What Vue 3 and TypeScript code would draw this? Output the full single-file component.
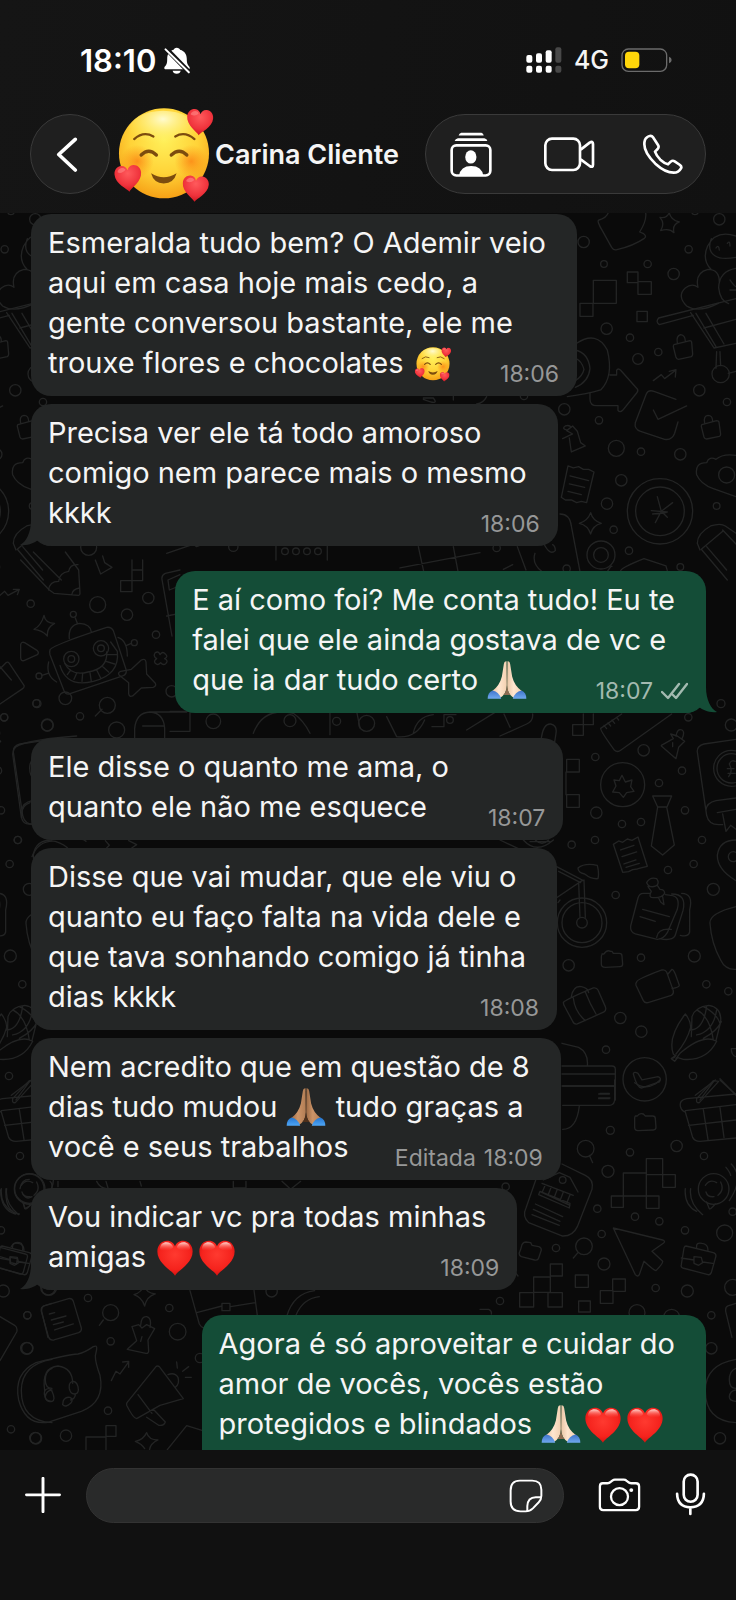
<script setup lang="ts">
type Message = {
  id: number
  sent: boolean
  text: string
  time?: string
  edited?: boolean
  tail?: boolean
  groupStart?: boolean
}

type Part = { kind: 'text' | 'emoji'; value: string }

const contact = 'Carina Cliente'

const messages: Message[] = [
  { id: 1, sent: false, time: '18:06', text: 'Esmeralda tudo bem? O Ademir veio\naqui em casa hoje mais cedo, a\ngente conversou bastante, ele me\ntrouxe flores e chocolates 🥰' },
  { id: 2, sent: false, time: '18:06', tail: true, text: 'Precisa ver ele tá todo amoroso\ncomigo nem parece mais o mesmo\nkkkk' },
  { id: 3, sent: true, time: '18:07', tail: true, groupStart: true, text: 'E aí como foi? Me conta tudo! Eu te\nfalei que ele ainda gostava de vc e\nque ia dar tudo certo 🙏🏻' },
  { id: 4, sent: false, time: '18:07', groupStart: true, text: 'Ele disse o quanto me ama, o\nquanto ele não me esquece' },
  { id: 5, sent: false, time: '18:08', text: 'Disse que vai mudar, que ele viu o\nquanto eu faço falta na vida dele e\nque tava sonhando comigo já tinha\ndias kkkk' },
  { id: 6, sent: false, time: '18:09', edited: true, text: 'Nem acredito que em questão de 8\ndias tudo mudou 🙏🏽 tudo graças a\nvocê e seus trabalhos' },
  { id: 7, sent: false, time: '18:09', tail: true, text: 'Vou indicar vc pra todas minhas\namigas ❤️❤️' },
  { id: 8, sent: true, groupStart: true, text: 'Agora é só aproveitar e cuidar do\namor de vocês, vocês estão\nprotegidos e blindados 🙏🏻❤️❤️' },
]

const emojiArt: Record<string, { id: string; cls: string }> = {
  '🥰': { id: 'emoji-face', cls: 'emoji-face' },
  '🙏🏻': { id: 'emoji-pray-light', cls: 'emoji-pray' },
  '🙏🏽': { id: 'emoji-pray-medium', cls: 'emoji-pray' },
  '❤️': { id: 'emoji-heart', cls: 'emoji-heart' },
}

function parts(text: string): Part[] {
  return text
    .split(/(🥰|🙏🏻|🙏🏽|❤️)/u)
    .filter((p) => p.length > 0)
    .map((p) => ({ kind: p in emojiArt ? 'emoji' : 'text', value: p }))
}

// Bubbles of the wallpaper: x, y, radius on each doodle sheet
const dotsA = [[958,58,17],[866,148,11],[612,192,10],[743,192,11],[821,222,17],[551,126,17],[620,386,17],[690,413,11],[714,477,16],[775,456,11],[898,571,17],[981,606,11],[493,628,17],[597,661,11],[649,745,24],[723,755,11],[841,763,17],[664,841,17],[621,911,17],[950,918,10],[641,989,11],[687,1052,11],[603,1065,42],[603,1065,22],[841,1101,10],[780,934,98],[780,934,73],[962,522,26],[885,34,10],[290,1044,11],[372,588,11],[500,1106,11],[980,825,24]]
const dotsB = [[663,11,12],[565,52,11],[694,75,18],[431,151,17],[286,171,11],[546,212,11],[477,249,11],[289,338,17],[366,372,11],[423,366,11],[555,331,11],[606,420,11],[285,420,11],[215,434,11],[581,492,11],[504,510,11],[640,568,18],[347,585,11],[206,796,17],[423,773,11],[583,768,18],[619,853,11],[685,874,11],[361,954,17],[424,995,17],[318,1049,11],[579,1128,11],[368,254,66],[246,668,74],[246,668,60],[246,668,16],[434,1138,65],[695,205,54],[695,205,44],[700,470,15]]
const dotsC = [[391,151,12],[590,198,17],[450,217,11],[672,228,11],[384,274,18],[352,386,11],[465,410,11],[538,424,11],[758,395,11],[615,451,11],[365,462,11],[228,504,11],[734,459,24],[372,552,18],[527,624,11],[622,633,18],[758,622,24],[60,663,11],[694,706,11],[471,698,24],[694,805,17],[720,1075,17],[77,320,11],[701,327,46],[317,206,25],[312,499,25],[248,300,10],[575,712,24]]
const dotsD = [[92,131,11],[293,134,24],[381,164,17],[445,114,17],[468,224,11],[403,248,9],[220,163,9],[117,348,9],[196,415,19],[322,436,24],[109,430,11],[240,469,11],[142,496,17],[350,510,24],[53,840,11],[214,297,23],[214,297,10],[303,265,23],[303,265,10],[12,472,11],[266,-38,24],[515,394,17],[1350,480,10],[1100,490,24],[870,482,18],[640,484,22],[700,-40,14],[1010,484,12],[855,-62,10],[855,-26,10],[888,-62,10],[888,-26,10],[921,-62,10],[921,-26,10],[954,-62,10],[954,-26,10]]
const dotsE = [[264,414,11],[82,466,11],[332,458,24],[533,515,25],[332,544,11],[80,565,18],[324,752,11],[33,808,11],[106,834,17],[198,827,17],[508,444,11],[815,394,17],[145,385,20],[600,594,14],[88,86,44]]
</script>

<template>
  <div class="phone">
    <svg class="sprites" aria-hidden="true">
      <defs>
        <radialGradient id="face-skin" cx="50%" cy="35%" r="68%">
          <stop offset="0" stop-color="#fff05a" />
          <stop offset="0.55" stop-color="#ffd338" />
          <stop offset="1" stop-color="#f59b12" />
        </radialGradient>
        <radialGradient id="face-shine" cx="50%" cy="20%" r="60%">
          <stop offset="0" stop-color="#fffbd0" />
          <stop offset="1" stop-color="#fff05a" stop-opacity="0" />
        </radialGradient>
        <radialGradient id="face-cheek">
          <stop offset="0" stop-color="#fb8213" stop-opacity="0.8" />
          <stop offset="1" stop-color="#fb8f13" stop-opacity="0" />
        </radialGradient>
        <radialGradient id="small-heart" cx="50%" cy="30%" r="75%">
          <stop offset="0" stop-color="#ff5a5c" />
          <stop offset="0.6" stop-color="#f0333c" />
          <stop offset="1" stop-color="#c9121d" />
        </radialGradient>
        <radialGradient id="big-heart" cx="50%" cy="40%" r="65%">
          <stop offset="0" stop-color="#ff3a30" />
          <stop offset="0.65" stop-color="#f5231d" />
          <stop offset="1" stop-color="#cf0d0d" />
        </radialGradient>
        <linearGradient id="heart-gloss" x1="0" y1="0" x2="0" y2="1">
          <stop offset="0" stop-color="#ffd9d2" />
          <stop offset="1" stop-color="#ff4a40" stop-opacity="0" />
        </linearGradient>
        <linearGradient id="sleeve" x1="0" y1="0" x2="0" y2="1">
          <stop offset="0" stop-color="#3f73c9" />
          <stop offset="1" stop-color="#6fa8ee" />
        </linearGradient>
        <linearGradient id="sleeve-bright" x1="0" y1="0" x2="0" y2="1">
          <stop offset="0" stop-color="#2374cf" />
          <stop offset="1" stop-color="#4fa6f5" />
        </linearGradient>
        <linearGradient id="skin-light" x1="0" y1="0" x2="1" y2="0">
          <stop offset="0" stop-color="#e9c5a4" />
          <stop offset="0.45" stop-color="#ffe6cf" />
          <stop offset="1" stop-color="#f3d0b0" />
        </linearGradient>
        <linearGradient id="skin-medium" x1="0" y1="0" x2="1" y2="0">
          <stop offset="0" stop-color="#9c6a44" />
          <stop offset="0.45" stop-color="#cc9468" />
          <stop offset="1" stop-color="#b27d54" />
        </linearGradient>
      </defs>

      <symbol id="heart-shape" viewBox="0 0 100 100">
        <path d="M50 98C44 86 2 66 2 32C2 14 15 3 28 3C40 3 47 10 50 20C53 10 60 3 72 3C85 3 98 14 98 32C98 66 56 86 50 98Z" fill="url(#small-heart)" />
        <path d="M14 24C15 12 36 4 43 18C35 28 20 30 14 24Z" fill="#ff8b89" opacity="0.6" />
      </symbol>

      <symbol id="emoji-heart" viewBox="0 0 100 100">
        <path d="M50 99C44 86 1 66 1 32C1 13 14 2 27 2C40 2 47 9 50 18C53 9 60 2 73 2C86 2 99 13 99 32C99 66 56 86 50 99Z" fill="url(#big-heart)" />
        <path d="M8 25C9 0 40 2 45 20C38 30 14 34 8 25Z" fill="url(#heart-gloss)" />
        <path d="M55 20C60 2 91 0 92 25C86 34 62 30 55 20Z" fill="url(#heart-gloss)" />
      </symbol>

      <symbol id="emoji-face" viewBox="340 254 306 296">
        <circle cx="493" cy="400" r="136" fill="url(#face-skin)" />
        <ellipse cx="490" cy="335" rx="105" ry="64" fill="url(#face-shine)" />
        <circle cx="412" cy="424" r="50" fill="url(#face-cheek)" />
        <circle cx="575" cy="424" r="50" fill="url(#face-cheek)" />
        <g fill="none" stroke="#7c4c0e" stroke-linecap="round">
          <path d="M403 357Q431 332 461 349M527 349Q556 332 585 357" stroke-width="7" />
          <path d="M424 405Q447 382 470 405M515 405Q539 382 562 405" stroke-width="10" />
        </g>
        <path d="M454 460Q492 484 531 460Q523 490 492 491Q462 490 454 460Z" fill="#7c4c0e" />
        <use href="#heart-shape" x="560" y="264" width="82" height="84" transform="rotate(5 600 306)" />
        <use href="#heart-shape" x="343" y="434" width="84" height="84" transform="rotate(-5 385 476)" />
        <use href="#heart-shape" x="547" y="465" width="82" height="84" transform="rotate(4 588 507)" />
      </symbol>

      <symbol id="emoji-pray-light" viewBox="538 72 121 121">
        <path d="M597 76Q590 75 589 84L583 122Q576 150 554 166L576 188Q598 176 598 148Z" fill="url(#skin-light)" />
        <path d="M600 76Q607 75 608 84L614 122Q621 150 643 166L621 188Q599 176 599 148Z" fill="url(#skin-light)" />
        <path d="M598 84V150Q597 168 588 178H609Q600 168 599 150V84Z" fill="#8e6c52" />
        <path d="M540 189Q540 170 555 164Q574 168 581 189Z" fill="url(#sleeve)" />
        <path d="M657 189Q657 170 642 164Q623 168 616 189Z" fill="url(#sleeve)" />
      </symbol>

      <symbol id="emoji-pray-medium" viewBox="538 72 121 121">
        <path d="M597 76Q590 75 589 84L583 122Q576 150 554 166L576 188Q598 176 598 148Z" fill="url(#skin-medium)" />
        <path d="M600 76Q607 75 608 84L614 122Q621 150 643 166L621 188Q599 176 599 148Z" fill="url(#skin-medium)" />
        <path d="M598 84V150Q597 168 588 178H609Q600 168 599 150V84Z" fill="#4e301b" />
        <path d="M540 189Q540 170 555 164Q574 168 581 189Z" fill="url(#sleeve-bright)" />
        <path d="M657 189Q657 170 642 164Q623 168 616 189Z" fill="url(#sleeve-bright)" />
      </symbol>
    </svg>

    <header class="top">
      <div class="status">
        <div class="clock">
          <span>18:10</span>
          <svg class="bell" viewBox="494 80 76 80" role="img" aria-label="Silencioso">
            <path fill="#fff" d="M531 82c-5 0-8 3-9 6c-14 4-19 14-19 27c0 14-2 18-7 23c-3 4-2 8 3 8h66c5 0 6-4 3-8c-5-6-7-10-7-23c0-13-6-23-20-27c-1-3-4-6-10-6ZM519 150h24q-2 9-12 9t-12-9Z" />
            <path d="M499 84L567 154" stroke="#131313" stroke-width="14" />
            <path d="M498 87L567 155" stroke="#fff" stroke-width="6" stroke-linecap="round" />
          </svg>
        </div>
        <div class="indicators">
          <svg class="signal" viewBox="479 80 108 78" role="img" aria-label="Sinal">
            <g fill="#fff">
              <rect x="480" y="104" width="18" height="23" rx="6" />
              <rect x="480" y="136" width="18" height="21" rx="6" />
              <rect x="509" y="99" width="18" height="28" rx="6" />
              <rect x="509" y="136" width="18" height="21" rx="6" />
              <rect x="538" y="90" width="18" height="37" rx="6" />
              <rect x="538" y="136" width="18" height="21" rx="6" />
            </g>
            <g fill="#484848">
              <rect x="567" y="81" width="18" height="46" rx="6" />
              <rect x="567" y="136" width="18" height="21" rx="6" />
            </g>
          </svg>
          <span class="network">4G</span>
          <svg class="battery" viewBox="758 83 153 72" role="img" aria-label="Bateria">
            <rect x="761" y="86" width="134" height="67" rx="19" fill="none" stroke="#6b6b6b" stroke-width="4" />
            <rect x="770" y="94" width="43" height="50" rx="12" fill="#ffd60a" />
            <path d="M902 109q8 3 8 10t-8 10Z" fill="#6b6b6b" />
          </svg>
        </div>
      </div>

      <div class="nav">
        <button type="button" class="back" aria-label="Voltar">
          <svg viewBox="168 348 66 106" aria-hidden="true">
            <path d="M226 355L176 401L226 448" fill="none" stroke="#fff" stroke-width="11" stroke-linecap="round" stroke-linejoin="round" />
          </svg>
        </button>
        <svg class="avatar" role="img" aria-label="🥰"><use href="#emoji-face" /></svg>
        <h1>{{ contact }}</h1>
        <div class="actions">
          <button type="button" aria-label="Contatos">
            <svg class="i-card" viewBox="246 330 127 135" aria-hidden="true">
              <path fill="#fff" d="M280 332h61q6 2 7 8h-76q2-6 8-8ZM270 348h80q8 2 9 9h-99q2-7 10-9Z" />
              <rect x="251" y="370" width="117" height="91" rx="14" fill="none" stroke="#fff" stroke-width="8" />
              <ellipse cx="309" cy="405" rx="17" ry="20" fill="#fff" />
              <path fill="#fff" d="M273 462q5-30 37-30t37 30Z" />
            </svg>
          </button>
          <button type="button" aria-label="Chamada de vídeo">
            <svg class="i-video" viewBox="518 350 165 105" aria-hidden="true">
              <g fill="none" stroke="#fff" stroke-width="8" stroke-linejoin="round">
                <rect x="534" y="355" width="104" height="94" rx="20" />
                <path d="M640 388L667 367Q677 361 677 371V433Q677 443 667 437L640 417" />
              </g>
            </svg>
          </button>
          <button type="button" aria-label="Ligar">
            <svg class="i-phone" viewBox="825 343 120 120" aria-hidden="true">
              <path fill="none" stroke="#fff" stroke-width="8" stroke-linejoin="round" d="M845 349q6-2 10 4l15 23q4 6-1 12l-8 8q4 12 16 24q12 11 23 14l8-8q6-5 12-1l16 11q6 5 3 10q-7 13-22 13q-25 0-55-27q-33-32-33-58q0-16 8-21q3-3 8-4Z" />
            </svg>
          </button>
        </div>
      </div>
    </header>

    <main class="chat">
      <svg class="wallpaper" viewBox="0 213 736 1237" preserveAspectRatio="xMidYMin slice" aria-hidden="true">
        <g id="doodles" fill="none" stroke-width="4" stroke-linecap="round" stroke-linejoin="round">
          <g transform="translate(400 200) scale(0.3333)">
            <circle v-for="(d, i) in dotsA" :key="i" :cx="d[0]" :cy="d[1]" :r="d[2]" />
            <path d="M625 38q-5 15-28 22q-8 2 10 32l28 50q6 10 16 7q50-12 82-34q8-6-2-14l-12-5q22-35 18-58" />
            <path d="M808 38Q812 60 838 66Q816 74 822 98Q808 84 782 92Q796 70 780 52Q800 56 808 38ZM572 938Q578 962 604 970Q578 976 572 1002Q564 976 538 970Q564 962 572 938Z" />
            <path d="M580 241h69v69h-69ZM540 310h39v39h-39ZM682 216h32v32h-32ZM714 245h40v38h-40ZM711 334h31v31h-31Z" />
            <path d="M1008 108q-60-20-85 30q-18 40 10 70M1008 172q-44 8-62-4q-26-16-12-52M958 150q-2-18-10-6M990 138q0-18-8-8M955 310q-60 30-95 8q-30-30-4-54q20-16 38-2q-10-44 30-54q36 0 34 42M1008 205q-50 8-52 58q4 40 30 48M990 240q12 18 18 20M990 270h18" />
            <path d="M776 354L1008 296M778 374L880 346M776 354q-10 12 2 20M872 338L942 444M888 340L948 440M918 340l54 92M912 384l96-26M942 444l66-14M950 455l-2 50M960 455l2 42M985 520l23-6" />
            <path d="M822 434l48-12q4 0 5 4l3 36q0 6-4 8l-38 8q-6 0-8-6l-8-32q0-6 2-6ZM832 428q-4-20 10-24q14 2 14 20M906 674l44-12q6 0 7 4l5 36q0 6-4 7l-38 8q-6 0-8-6l-8-32q0-4 2-5ZM914 668q-4-20 10-22q14 0 14 18" />
            <path d="M760 542l24-18l10 12l34-26M808 514l20-5l-2 22M622 1115q12-20 14-16M310 1108l28-14" />
            <path d="M530 430q60-40 92 20q20 80-20 120q-40 12-100 20M526 450q40 10 44 56q-4 40-44 56M526 474q20 10 26 34q-4 20-26 34M630 525h20v-14q4-8 12 0l50 56q4 6-2 12l-42 52q-8 8-14 0v-14h-64q-20 0-20-20v-20" />
            <path d="M828 598l-66-24q-18-6-24 10l-32 84q-4 20 16 26l72 24q22 4 30-18l10-34M760 630l14 28l86-40" />
            <path d="M488 716l30-14l-18-10l18-14l14 16l10 34l14 10l-42 18l-6-42M500 690q-16-4-4-12q12-4 18 4" />
            <path d="M504 798l16 6l16-4l14 8l16 0l16 8l-22 92l-16-4l-14 4l-16-8l-18 0l-12-8ZM510 828l56 14M508 852l46 10M504 874l40 10" />
            <path d="M772 890l12 44l34-26M784 934l-18 34M784 934l18 18M754 932l48 4M758 942l40-4" />
            <path d="M1008 766q-40-6-60 12q-20-10-28 10q-36 0-30 36q12 28 50 42l68 24M900 1050l-8-20q0-30 40-52q30-10 44 0l32 22M904 1048l66-56M906 1050l76 90M968 990l40 42M920 1040l60 70" />
            <path d="M480 942q30 0 34 36l26 136M405 1060q-10 30 20 54M432 1032q18 36 34 20q0-14-8-18M55 1040l16 74M160 1040l14 74M352 1040l26 70M0 1104l240-46M662 1112q4-10 70-36l66 22l4 14" />
            <path d="M70 594h30q20 24-30 4M160 586v14M260 590q-10 20-30 22" />
          </g>
          <g transform="translate(500 700) scale(0.3333)">
            <circle v-for="(d, i) in dotsB" :key="i" :cx="d[0]" :cy="d[1]" :r="d[2]" />
            <path d="M366 226l10 20l20-6l-4 20l10 14l-22 4l-10 14l-12-14l-20-2l10-18l-6-18l16 2Z" />
            <path d="M302 85L365 42M302 85q-2 6 40 64q10 10 20 2L515 42M312 76l8 10M324 68l8 10M336 60l8 10M350 52l6 8" />
            <path d="M200 178h38v38h-38ZM200 284h38v38h-38ZM198 216v68M218 74h32v32h-32ZM250 42v32h30v-32M12 42l18 40M0 108l80-36q20-8 18-30M124 114q6-44 28-42q20 4 16 28l-4 26" />
            <path d="M458 288h57l-14 33h-28ZM473 321l-19 117l34 27l35-30l-23-114" />
            <path d="M340 433l16-10l12 4l14-10l14 4l18-10l28 88l-16 4l-14 4l-14 2l-12 6l-18 2ZM362 450l40-14M366 470l44-14M372 492l36-12M378 502l40-12" />
            <path d="M484 136l36-20l-8-14l20 6l22 16l-18 18l-8 34l-44-38M528 108q4-24 18-18q10 6 0 26M518 128v12" />
            <path d="M708 118l-96 14q-22 6-20 24l28 190q6 28 36 28h12M708 294l-60 8q-28 6-30 28M708 328l-56 10M668 342l10 52l14-18l16 12M684 220h22M686 230q14-16 2-38q6-14 18-8M682 206h20" />
            <path d="M170 500l80 42M176 514l66 34M172 592l74-50M236 548l4 104M252 540l4 112M234 504q20-16 58-8q6 24 2 40q-20 2-40-14q-20-4-20-18ZM0 420l60 28M70 420q40 44 90 0M90 425h60M180 600l-6 8M106 420q20 20 40 0" />
            <path d="M450 580h-20q-12 0-16 14l-22 84q-2 18 14 24l66 16q18 0 30-20l30-70q10-40-20-42l-16-2M470 712q4-28 44-24M515 582q46 0 34 50l-24 76q-10 16-46 8M545 580q36 0 24 50v66q-4 16-28 10M428 628l80 22M420 650l46 14" />
            <path d="M440 548q10-18 30-12q10 14-2 22q-20 8-28-10ZM444 560l10 14q-8 14 0 18q30 4 40-12q0-12-14-12l-8-12M476 594l6 12l10 8l-4-24" />
            <path d="M708 620q-80 20-78 50q4 60 32 110q14 30 46 28M708 420q-50 0-56 46q0 44 56 76" />
            <path d="M306 762h6q8-14 20-8h4l4 6h18q8 0 8 8l2 24q0 8-8 8l-44 2q-12 0-12-10v-20q0-6 2-8ZM410 846q0-8 76-36q10-2 14 6l20 56q2 10-6 14l-70 22q-10 2-14-6l-22-46q-2-6 2-10ZM504 822l12-14q4 0 10 14l12 34q0 6-22 10" />
            <path d="M190 908q4-8 90-44q10-2 14 6l22 50q4 10-4 16l-80 36q-10 2-14-8l-26-48ZM220 894q4 40 36 68M256 876q14 36 32 66M214 890q6-34 30-30q20 4 22 18" />
            <path d="M514 1076q20-4 6-14q-18-50 36-120q16 20 16 40q-10 40-44 80M528 1076l12-16q70-60 110-36q-30 60-100 54l-14-4M528 1066l-14 10l10 8l10-12M576 950q10-30 50-34q40 6 36 50l-14 56M576 950l-2 60M590 930q40 20 50 90M610 920q40 20 50 50M570 990q40 0 50-70M590 1005q50-10 60-75M610 1015q40-20 54-50" />
            <path d="M186 1098h150q10 0 10 10v92M186 1122h160M186 1158h160M300 1180h28M186 1030l50 12q30 16 26 56M296 1194h34M400 1122q2-8 14-2l12 20l48-10q12 4 4 16l-52 18q-14 2-26-42ZM586 1186l60-46M660 1136l48 50M640 1146l-40 54M708 1046h-14q0 20 14 24" />
          </g>
          <g transform="translate(480 1080) scale(0.3333)">
            <circle v-for="(d, i) in dotsC" :key="i" :cx="d[0]" :cy="d[1]" :r="d[2]" />
            <path d="M248 18h158M404 0v60q-2 16-16 16h-140M356 42h32M356 56h32M298 78q-8 70-50 70M466 108h6q6-10 18-6l6 6h22q8 0 8 8l2 26q0 8-8 8l-46 2q-10 0-10-10v-26q0-6 2-8ZM464 8q30 22 62 4l14-12" />
            <path d="M768 42l-148 14q-24 4-18 26q4 12 14 14l22 76q6 12 22 12l108-10M616 92l152-18M626 136l142-16M670 88l14 90M720 82l12 90M650 56l50-54l16 2l-58 64q-10 2-8-10ZM720 0l48 44M328 226l10 22M294 518l-14 16" />
            <path d="M430 279h69v69h-69ZM499 236h49v48h-49ZM548 284h38v38h-38ZM394 348h36v34h-36ZM499 348h38v37h-38ZM499 284v64M161 591h50v46h-50ZM211 552h36v36h-36ZM119 638h42v43h-42ZM204 638h43v43h-43ZM286 585h39v37h-39ZM296 663h35v33h-35ZM398 597h38v37h-38ZM361 632h38v38h-38Z" />
            <path d="M246 252l70 34q26 12 20 42l-44 112q-14 30-46 28l-100-40q-20-20-8-44l30-86M190 300l48-22l32 14l24 44M186 310l94 36M182 336l88 40M176 344l4-10l90 36l-2 14ZM196 314l-10 24M214 320l-10 26M232 328l-10 26M250 336l-10 26M270 344l-10 26M166 372l82 38M160 388l80 36M156 404l82 32" />
            <path d="M400 444l148 36q10 4 2 10l-34 24l32 30q2 6-20 28q-6 0-36-28l-14 40q-4 8-12 0ZM122 508l4-14q4-8 12-8l14 2l4 8l20 4q8 2 8 10l-8 24q-2 8-12 6l-40-10q-8-4-6-12Z" />
            <path d="M680 366l8 20q2 4 18-14M676 316q14-20 34-8M678 336q4 16 24 14M722 306q12 24-8 40M632 326q-6 44 36 78M616 326q-4 50 34 68M754 252q40 40-6 110M738 262q12 14 14 24" />
            <path d="M618 498l82 20q8 2 8 10l-14 50q-4 8-10 6l-76-20q-6-2-4-10l8-50q2-6 6-6ZM604 534l38 6M668 546l30 4M642 530l22 2l4 16l-12 8l-14-6ZM650 502q-2-16 16-12q18 2 18 20" />
            <path d="M768 670l-24 8q-10 4-6 20l18 74M768 838q-92 16-92 94q0 90 92 96M768 865q-20 8-20 34t20 26M768 930q-18 2-20 20q0 12 20 14M0 688h26q10 4 8 14M108 580l6 8" />
          </g>
          <g transform="translate(0 560) scale(0.3333)">
            <circle v-for="(d, i) in dotsD" :key="i" :cx="d[0]" :cy="d[1]" :r="d[2]" />
            <path d="M62 0l86 90M100 -24l84 84M148 90l14 10l74 6q4 0 4-6l-4-70l-40-54M146 90q2-26 30-26q2-26 30-30q4-22 28-20M216 102q2-14 22-18M286 0l16 42l10-6l24-14l-22-14l-6-20M362 62h34v33h-34ZM396 30h32v32h-32ZM396 0v30M428 0v30" />
            <path d="M132 166Q136 190 164 190Q140 202 142 228Q126 210 102 208Q124 196 132 166ZM62 254q2-10 12-6l38 24q6 6 0 12l-40 18q-10 2-10-10ZM0 106l14-12l10 12l34-18M40 88l18 0l-6 16M306 448l-20 20" />
            <path d="M150 270q0-12 170-68q14-2 20 10l38 116q4 14-10 20L208 402q-12 2-16-10L150 284q-2-8 0-14ZM208 236q-4-40 30-46q34 2 36 26M226 174l6 16M354 232q28 10 28 56M380 256l14-6M146 306q-10 40 24 60M126 346l18-6" />
            <path d="M180 316q20 68 100 48q80-20 72-90l-20-28M194 310q20 40 70 26q60-10 56-60M202 344l10-14M222 358l8-18M246 364l2-24M274 364l-4-26M302 354l-12-24M326 336l-20-18M344 312l-26-8M350 284l-28 0" />
            <path d="M424 300q12-6 14 6l2 36l26 28q4 8-6 12l-36 2l-26 24q-10 4-12-6l0-34l-28-22q-6-8 4-12l32-6ZM466 278q10-6 14 6q8-12 16-2q10 8-2 14q12 6 4 14q-6 8-16-2q-8 10-16 2q-6-8 4-14q-12-8-4-18ZM0 326l18-18q6-4 10 2l44 66q2 6-4 10l-68 46M0 320l34 40" />
            <path d="M404 540v-34q4-48 46-50q40 2 44 48v36M450 456h110M428 498h62M540 30l-44 10q-12 6-10 18l30 170M540 44l-36 16l4 30l30-12M540 160l-40 8M230 528q-180 14-188 40l-4 14l26 190q6 22 26 20h20M90 728q-30 10-24 46M96 890q20-50 70-46q30 10 40 24M316 842l12 14l-10 10M386 842l24 12l-20 14M236 838q14-2 22 6" />
            <path d="M510 454h60v60h-60M760 520q30-80 120-60q30 20 50 60M990 454v70M1070 454l10 50M1160 470l30 60q60 6 84-50M1296 500h36v-36h36M1400 510l90-56M1240 520q10-50 60-56M828 -80v80M982 -80v80M500 -20l170-58M560 -60l30 20l50-20" />
          </g>
          <g transform="translate(0 1160) scale(0.3333)">
            <circle v-for="(d, i) in dotsE" :key="i" :cx="d[0]" :cy="d[1]" :r="d[2]" />
            <path d="M132 438l74-22q10-2 14 8l24 80q2 10-8 14l-74 22q-12 2-16-8l-22-78q-2-12 8-16ZM148 462l16-4M154 480l44-12M160 494l30-8M164 510l56-18M310 480l-12 16M0 470l44 26q10 8 6 20L0 602" />
            <path d="M432 376Q438 398 466 402Q440 410 434 438Q426 412 402 404Q426 396 432 376ZM440 818Q446 840 474 840Q448 852 448 876M440 818Q430 840 406 844Q426 852 434 866M382 568l28-26l-14-42l20-6l10 10l14-10l24 12l-20 34l2 34q-2 8-8 6l-56-12M422 496q2-28 18-26q16 4 10 32M426 530l-4 14" />
            <path d="M280 560q12-6 10 8l-4 20q0 20 14 58q16 80-56 108l-96 32q-70 14-92-66q-16-80 52-112q94-24 126-26q20-4 46-22ZM134 692q-10-70 40-74q44 6 44 52M136 690q12-10 20 4q12 26 0 30q-14 4-20-10q-6-16 0-24ZM214 666q14-6 20 14q4 20-8 22q-14 2-18-16q-2-16 6-20ZM226 702q0 14-14 18M190 722q6-12 20-10q12 6 2 18q-16 14-24 4Z" />
            <path d="M334 662l14-28l12 8l26-36M368 606l18-2v18M468 620q4-4 10 0l72 96l-70 20l-70 40q-10 0-30-40q-2-6 4-12ZM414 704l42 56M504 644q20-8 30 8q6 20-8 30M440 772l36 24q16 2 20-10l-36-38M530 606l2 18M548 634l18-14M556 652h18" />
            <path d="M258 869v-38h60v-34h30v32h-30v40M502 869l58-72l46 14M570 392l28 100q6 10 12 12M762 390l10 76M590 458l76-20M692 440l74-12M666 430h24v22h-24ZM860 470q20-70 84-78M888 466q20-50 70-56M0 262l76 20q8 2 6 10l-12 44q-2 8-10 6L0 324M34 260q10-18 30-10q6 10 4 20M0 290l28 8M52 304l24 4M30 292l22 4l-2 16l-18-4Z" />
            <path d="M70 128l4 18q20-8 20-16M60 86q4-28 28-28M70 104q10 16 26 6M18 86q-4 70 40 76M2 90q0 60 44 72M150 64q10 8 4 26M174 64v16M290 64q10 20 30 22M318 64l6 20M420 64l4 14M700 64v20h38v-20M846 64l26 24l30-24" />
          </g>
        </g>
        <use href="#doodles" x="-684" />
      </svg>

      <div class="messages">
        <article
          v-for="m in messages"
          :key="m.id"
          class="bubble"
          :class="{ sent: m.sent, 'group-start': m.groupStart, pending: !m.time }"
        >
          <p>
            <template v-for="(part, i) in parts(m.text)" :key="i">
              <template v-if="part.kind === 'text'">{{ part.value }}</template>
              <svg v-else class="emoji" :class="emojiArt[part.value].cls" role="img" :aria-label="part.value"><use :href="'#' + emojiArt[part.value].id" /></svg>
            </template>
            <span v-if="m.time" class="stamp" :class="{ edited: m.edited }">
              <span v-if="m.edited">Editada</span>
              <time>{{ m.time }}</time>
              <svg v-if="m.sent" class="ticks" viewBox="0 0 27 18" role="img" aria-label="Entregue">
                <path d="M1 10L7 16L18 2M12 13L15 16L26 2" fill="none" stroke="#a3bab0" stroke-width="2.4" stroke-linecap="round" stroke-linejoin="round" />
              </svg>
            </span>
          </p>
          <svg v-if="m.tail" class="tail" viewBox="0 0 30 26" aria-hidden="true">
            <path d="M11 0C11 13 6 22 0 25C8 26 14 23 18 20Q22 25 30 26V0Z" />
          </svg>
        </article>
      </div>
    </main>

    <form class="composer" @submit.prevent>
      <button type="button" class="plain plus" aria-label="Anexar">
        <svg viewBox="74 137 110 111" aria-hidden="true">
          <path d="M129 141V244M78 192H180" stroke="#fff" stroke-width="9" stroke-linecap="round" />
        </svg>
      </button>
      <div class="field">
        <input type="text" aria-label="Mensagem" />
        <button type="button" class="plain" aria-label="Figurinhas">
          <svg class="i-sticker" viewBox="421 293 104 104" aria-hidden="true">
            <g fill="none" stroke="#fff" stroke-width="6" stroke-linejoin="round" stroke-linecap="round">
              <path d="M454 298H492Q520 298 520 326V344Q520 356 512 364L494 383Q485 392 472 392H456Q426 392 426 362V328Q426 298 454 298Z" />
              <path d="M477 391V376Q478 350 503 349H519" />
            </g>
          </svg>
        </button>
      </div>
      <button type="button" class="plain" aria-label="Câmera">
        <svg class="i-camera" viewBox="688 291 130 104" aria-hidden="true">
          <g fill="none" stroke="#fff" stroke-width="7" stroke-linejoin="round">
            <path d="M702 307H716Q722 307 726 303L731 299Q735 296 739 296H766Q771 296 774 299L779 303Q783 307 789 307H803Q813 307 813 317V379Q813 389 803 389H703Q693 389 693 379V317Q693 307 702 307Z" />
            <circle cx="753" cy="348" r="26" />
          </g>
          <circle cx="789" cy="328" r="6" fill="#fff" />
        </svg>
      </button>
      <button type="button" class="plain" aria-label="Gravar áudio">
        <svg class="i-mic" viewBox="920 277 93 130" aria-hidden="true">
          <g fill="none" stroke="#fff" stroke-width="8" stroke-linecap="round">
            <rect x="946" y="282" width="42" height="82" rx="21" />
            <path d="M926 340Q927 380 966 381Q1006 380 1007 340M966 381V401" />
          </g>
        </svg>
      </button>
    </form>
  </div>
</template>

<style>
body {
  margin: 0;
  background: #111;
}
</style>

<style scoped>
.phone {
  display: flex;
  flex-direction: column;
  height: 100vh;
  color: #f5f5f5;
  background: #0a0a0a;
  font-family: Inter, "Liberation Sans", sans-serif;
}

.sprites {
  position: absolute;
  width: 0;
  height: 0;
}

button {
  display: flex;
  align-items: center;
  justify-content: center;
  margin: 0;
  padding: 0;
  border: 0;
  background: none;
  color: inherit;
}

.top {
  flex: none;
  background: linear-gradient(100deg, #151515, #111);
}

.status {
  display: flex;
  align-items: center;
  justify-content: space-between;
  padding: 40px 64px 0 80px;
  height: 40px;
}

.clock,
.indicators {
  display: flex;
  align-items: center;
}

.clock {
  gap: 8px;
  font-size: 31px;
  font-weight: 600;
  color: #fff;
}

.bell {
  width: 26px;
  height: 27px;
}

.indicators {
  gap: 12px;
}

.signal {
  width: 36px;
  height: 26px;
}

.network {
  font-size: 25px;
  font-weight: 500;
}

.battery {
  width: 51px;
  height: 24px;
}

.nav {
  display: flex;
  align-items: center;
  padding: 25px 30px 10px;
}

.back,
.actions {
  box-sizing: border-box;
  height: 80px;
  border: 1px solid #3a3a3a;
  background: #1f1f1f;
  border-radius: 40px;
}

.back {
  flex: none;
  width: 80px;
  padding-right: 6px;
}

.back svg {
  width: 22px;
  height: 35px;
}

.avatar {
  flex: none;
  width: 102px;
  height: 98px;
  margin: 0 0 0 3px;
}

h1 {
  flex: 1;
  margin: 0;
  min-width: 0;
  font-size: 27px;
  font-weight: 600;
  white-space: nowrap;
}

.actions {
  display: flex;
  align-items: center;
  justify-content: space-between;
  flex: none;
  width: 281px;
  padding: 0 22px 0 24px;
}

.i-card {
  width: 42px;
  height: 45px;
}

.i-video {
  width: 55px;
  height: 35px;
}

.i-phone {
  width: 40px;
  height: 40px;
}

.chat {
  position: relative;
  flex: 1;
  min-height: 0;
  overflow: hidden;
}

.wallpaper {
  position: absolute;
  inset: 0;
  width: 100%;
  height: 100%;
  stroke: #232424;
}

.messages {
  position: relative;
  box-sizing: border-box;
  display: flex;
  flex-direction: column;
  align-items: flex-start;
  gap: 8px;
  height: 100%;
  padding: 1px 30px 0 31px;
  overflow-y: auto;
  scrollbar-width: none;
}

.bubble {
  --fill: #242626;
  --muted: #979898;
  position: relative;
  flex: none;
  padding: 9px 31px 13px 17px;
  border-radius: 20px;
  background: var(--fill);
}

.bubble.sent {
  --fill: #144d37;
  --muted: #a3bab0;
  align-self: flex-end;
}

.bubble.group-start {
  margin-top: 17px;
}

.bubble.pending {
  padding-bottom: 40px;
}

.bubble p {
  margin: 0;
  font-size: 29px;
  line-height: 40px;
  white-space: pre-line;
}

.emoji {
  display: inline-block;
  vertical-align: -6px;
}

.emoji-face {
  width: 38px;
  height: 36px;
  margin: -4px 2px -3px;
}

.emoji-pray {
  width: 40px;
  height: 40px;
  margin: -8px 1px -4px;
}

.emoji-heart {
  width: 36px;
  height: 36px;
  margin: -4px 3px -3px;
}

.stamp {
  float: right;
  display: flex;
  align-items: center;
  gap: 8px;
  margin: 18px -13px -5px 61px;
  font-size: 23px;
  line-height: 26px;
  color: var(--muted);
  white-space: nowrap;
}

.emoji + .stamp {
  margin-left: 41px;
}

.stamp.edited {
  margin-left: 20px;
}

.ticks {
  width: 27px;
  height: 18px;
}

.tail {
  position: absolute;
  left: -11px;
  bottom: 0;
  width: 30px;
  height: 26px;
  fill: var(--fill);
}

.sent .tail {
  left: auto;
  right: -11px;
  transform: scaleX(-1);
}

.composer {
  display: flex;
  align-items: flex-start;
  flex: none;
  padding: 18px 30px 77px 25px;
  background: #111;
}

.plain {
  flex: none;
  height: 53px;
}

.plus svg {
  width: 36px;
  height: 36px;
}

.field {
  box-sizing: border-box;
  display: flex;
  align-items: center;
  flex: 1;
  min-width: 0;
  height: 55px;
  margin: 0 34px 0 25px;
  padding: 0 20px 0 28px;
  border: 1px solid #333;
  border-radius: 28px;
  background: #292a2a;
}

.field input {
  flex: 1;
  min-width: 0;
  border: 0;
  outline: 0;
  background: none;
  color: inherit;
  font: inherit;
  font-size: 29px;
}

.i-sticker {
  width: 34px;
  height: 34px;
}

.i-camera {
  width: 43px;
  height: 34px;
}

.i-mic {
  width: 31px;
  height: 43px;
  margin-left: 34px;
}
</style>
